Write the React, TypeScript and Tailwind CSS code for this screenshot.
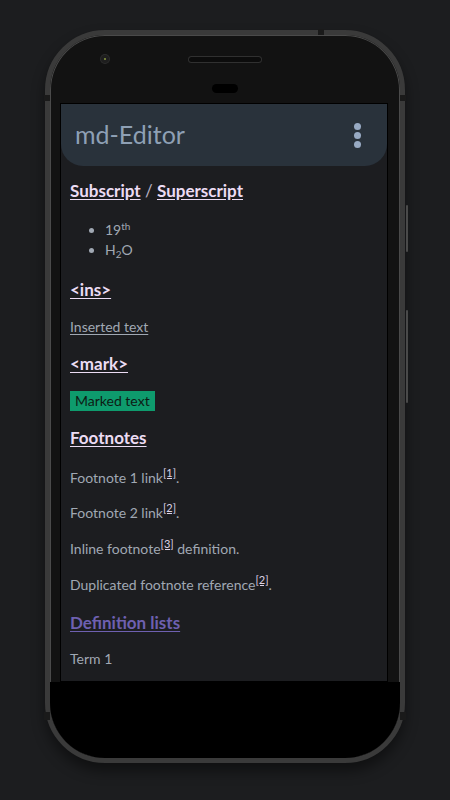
import React from "react";

function Sup({ children }: { children: React.ReactNode }) {
  return <sup className="-top-[6px] text-[11px] text-[#dcd2e6] underline">{children}</sup>;
}

function Heading({ children, color = "text-[#ecdcf4]" }: { children: React.ReactNode; color?: string }) {
  return (
    <div className={`h-[20px] text-[17px] font-bold leading-[20px] underline underline-offset-2 ${color}`}>
      {children}
    </div>
  );
}

function Para({ children, className = "" }: { children: React.ReactNode; className?: string }) {
  return <div className={`h-[20px] text-[14px] leading-[20px] text-[#a0a8b3] ${className}`}>{children}</div>;
}

export default function App() {
  return (
    <div className="h-[800px] w-[450px] overflow-hidden bg-[#1c1d1f] pt-[30px] font-['Lato','Noto_Sans',sans-serif]">
      {/* phone body */}
      <div className="relative ml-[45px] h-[733px] w-[360px] rounded-[60px] border-[5px] border-[#3a3a3a] bg-[#121212] shadow-[inset_0_0_0_1px_#4a4a4a,0_8px_14px_rgba(0,0,0,0.45)]">
        {/* frame marks and side keys */}
        <div className="absolute -top-[6px] left-[268px] h-[6px] w-[6px] bg-[#1a1a1a]" />
        <div className="absolute -left-[6px] top-[60px] h-[6px] w-[6px] bg-[#1a1a1a]" />
        <div className="absolute -right-[6px] top-[60px] h-[6px] w-[6px] bg-[#1a1a1a]" />
        <div className="absolute -left-[6px] bottom-[38px] h-[8px] w-[6px] bg-[#1a1a1a]" />
        <div className="absolute -right-[6px] bottom-[38px] h-[8px] w-[6px] bg-[#1a1a1a]" />
        <div className="absolute -right-[8px] top-[170px] h-[47px] w-[2px] rounded bg-[#4a4a4a]" />
        <div className="absolute -right-[8px] top-[275px] h-[93px] w-[2px] rounded bg-[#4a4a4a]" />

        <div className="flex h-full flex-col overflow-hidden rounded-[55px]">
          {/* earpiece area */}
          <div className="flex h-[68px] shrink-0 flex-col items-center pt-[20px]">
            <div className="flex w-full items-center pl-[51px]">
              <div className="h-[8px] w-[8px] rounded-full bg-[#1e1e1e] ring-1 ring-[#2c2c2c]">
                <div className="ml-[3px] mt-[3px] h-[2px] w-[2px] rounded-full bg-[#8a9a40]" />
              </div>
              <div className="ml-[80px] h-[5px] w-[72px] rounded-full bg-[#0c0c0c] ring-1 ring-[#303030]" />
            </div>
            <div className="mt-[21px] h-[9px] w-[26px] rounded-full bg-black" />
          </div>

          {/* screen */}
          <div className="ml-[10px] h-[579px] w-[328px] shrink-0 overflow-hidden border border-black bg-[#1c1d20]">
            <div className="flex h-[62px] items-center justify-between rounded-b-[22px] bg-[#29323b] pl-[14px] pr-[26px]">
              <span className="text-[25px] font-normal text-[#8ea0b5]">md-Editor</span>
              <div className="flex flex-col gap-[2px]">
                <div className="h-[7px] w-[7px] rounded-full bg-[#98aac3]" />
                <div className="h-[7px] w-[7px] rounded-full bg-[#98aac3]" />
                <div className="h-[7px] w-[7px] rounded-full bg-[#98aac3]" />
              </div>
            </div>

            <div className="pl-[9px] pt-[15px]">
              <div className="h-[20px] text-[17px] font-bold leading-[20px] text-[#ecdcf4]">
                <span className="underline underline-offset-2">Subscript</span>
                <span className="font-normal text-[#b9b2c4]"> / </span>
                <span className="underline underline-offset-2">Superscript</span>
              </div>

              <ul className="mt-[19px] list-disc pl-[35px] text-[14px] leading-[20px] text-[#a0a8b3]">
                <li className="h-[20px]">
                  19<sup className="text-[10px]">th</sup>
                </li>
                <li className="h-[20px]">
                  H<sub className="text-[10px]">2</sub>O
                </li>
              </ul>

              <div className="mt-[20px]">
                <Heading>&lt;ins&gt;</Heading>
              </div>
              <Para className="mt-[17px] underline underline-offset-2">Inserted text</Para>
              <div className="mt-[17px]">
                <Heading>&lt;mark&gt;</Heading>
              </div>
              <div className="mt-[17px] flex h-[20px]">
                <span className="bg-[#0e9b6d] px-[5px] text-[14px] leading-[20px] text-[#0d1a14]">Marked text</span>
              </div>
              <div className="mt-[17px]">
                <Heading>Footnotes</Heading>
              </div>
              <Para className="mt-[20px]">
                Footnote 1 link<Sup>[1]</Sup>.
              </Para>
              <Para className="mt-[15px]">
                Footnote 2 link<Sup>[2]</Sup>.
              </Para>
              <Para className="mt-[16px]">
                Inline footnote<Sup>[3]</Sup> definition.
              </Para>
              <Para className="mt-[16px]">
                Duplicated footnote reference<Sup>[2]</Sup>.
              </Para>
              <div className="mt-[18px]">
                <Heading color="text-[#6e60b0]">Definition lists</Heading>
              </div>
              <Para className="mt-[16px]">Term 1</Para>
            </div>
          </div>
          <div className="flex-1 bg-black" />
        </div>
      </div>
    </div>
  );
}
